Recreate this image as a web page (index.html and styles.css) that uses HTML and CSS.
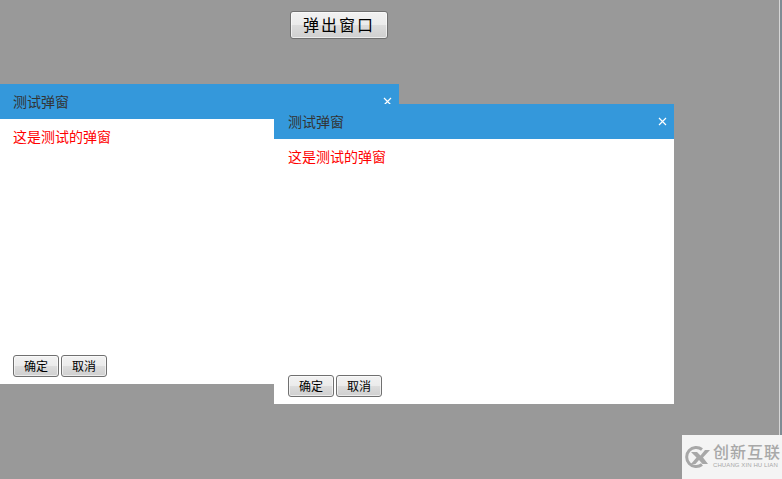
FILE: index.html
```html
<!DOCTYPE html>
<html>
	<head>
		<meta charset="utf-8">
		<title>弹窗</title>
		<link rel="stylesheet" href="styles.css">
	</head>
	<body>
		<div class="top">
			<button class="btn btn-open">弹出窗口</button>
		</div>
		<div class="dialog dialog-a">
			<div class="dialog-head">
				<span>测试弹窗</span>
				<svg class="close" width="9" height="9" viewBox="0 0 9 9"><path d="M1 1L8 8M8 1L1 8" stroke="#fff" stroke-width="1.2" fill="none"/></svg>
			</div>
			<div class="dialog-body">这是测试的弹窗</div>
			<div class="dialog-foot">
				<button class="btn">确定</button>
				<button class="btn">取消</button>
			</div>
		</div>
		<div class="dialog dialog-b">
			<div class="dialog-head">
				<span>测试弹窗</span>
				<svg class="close" width="9" height="9" viewBox="0 0 9 9"><path d="M1 1L8 8M8 1L1 8" stroke="#fff" stroke-width="1.2" fill="none"/></svg>
			</div>
			<div class="dialog-body">这是测试的弹窗</div>
			<div class="dialog-foot">
				<button class="btn">确定</button>
				<button class="btn">取消</button>
			</div>
		</div>
		<div class="edge"></div>
		<div class="mark">
			<svg class="mark-logo" width="25" height="24" viewBox="0 0 25 24">
				<path d="M17 4.5A9.5 9.5 0 1 0 17 19.5" stroke="#a8a8a8" stroke-width="3" fill="none"/>
				<path d="M6 7L12 7L15.5 10.5L20 5L25 5L18 12.5L23 19L17.5 19L14 15L10.5 19L6 19L11.5 12.5Z" fill="#a8a8a8"/>
			</svg>
			<div class="mark-text">
				<div class="mark-cn">创新互联</div>
				<div class="mark-en">CHUANG XIN HU LIAN</div>
			</div>
		</div>
	</body>
</html>
```

FILE: styles.css
```css
*{
	padding: 0;
	margin: 0;
	box-sizing: border-box;
}
html,body{
	height: 100%;
	overflow: hidden;
}
body{
	background: #999;
	font: 14px/20px "Liberation Sans","Noto Sans CJK SC",sans-serif;
	position: relative;
}
.top{
	padding: 11px 0 0 290px;
}
.btn{
	width: 46px;
	height: 22px;
	border: 1px solid #707070;
	border-radius: 3px;
	background: linear-gradient(#f2f2f2 0%,#ebebeb 50%,#dddddd 50%,#cfcfcf 100%);
	box-shadow: inset 0 0 0 1px rgba(255,255,255,0.6);
	color: #000;
	font: 12px/20px "Noto Sans CJK SC",sans-serif;
}
.btn-open{
	width: 98px;
	height: 28px;
	padding-bottom: 2px;
	font-size: 16px;
	letter-spacing: 2px;
	display: block;
}
.dialog{
	position: absolute;
	width: 400px;
	height: 300px;
	background: #fff;
	display: flex;
	flex-direction: column;
}
.dialog-a{
	left: -1px;
	top: 84px;
}
.dialog-b{
	left: 274px;
	top: 104px;
}
.dialog-head{
	height: 35px;
	background: #3498db;
	color: #333;
	padding: 0 7px 0 14px;
	display: flex;
	align-items: center;
	justify-content: space-between;
	font-size: 14px;
}
.close{
	display: block;
}
.dialog-body{
	flex: 1;
	padding: 8px 14px;
	color: #f00;
}
.dialog-foot{
	padding: 0 14px 7px;
	display: flex;
	gap: 2px;
}
.edge{
	position: absolute;
	right: 0;
	top: 0;
	bottom: 44px;
	width: 3px;
	background: #7f8c94;
	border-left: 1px solid #d6d6d6;
}
.mark{
	position: absolute;
	right: 0;
	bottom: 0;
	width: 100px;
	height: 44px;
	background: #f4f4f4;
	display: flex;
	align-items: center;
	gap: 3px;
	padding-left: 3px;
}
.mark-text{
	color: #a8a8a8;
}
.mark-cn{
	font: 500 16px/16px "Liberation Sans","Noto Sans CJK SC",sans-serif;
	letter-spacing: 1px;
}
.mark-en{
	font: 6px/7px "Liberation Sans",sans-serif;
	white-space: nowrap;
	letter-spacing: 0.1px;
	margin-top: 1px;
}
```
